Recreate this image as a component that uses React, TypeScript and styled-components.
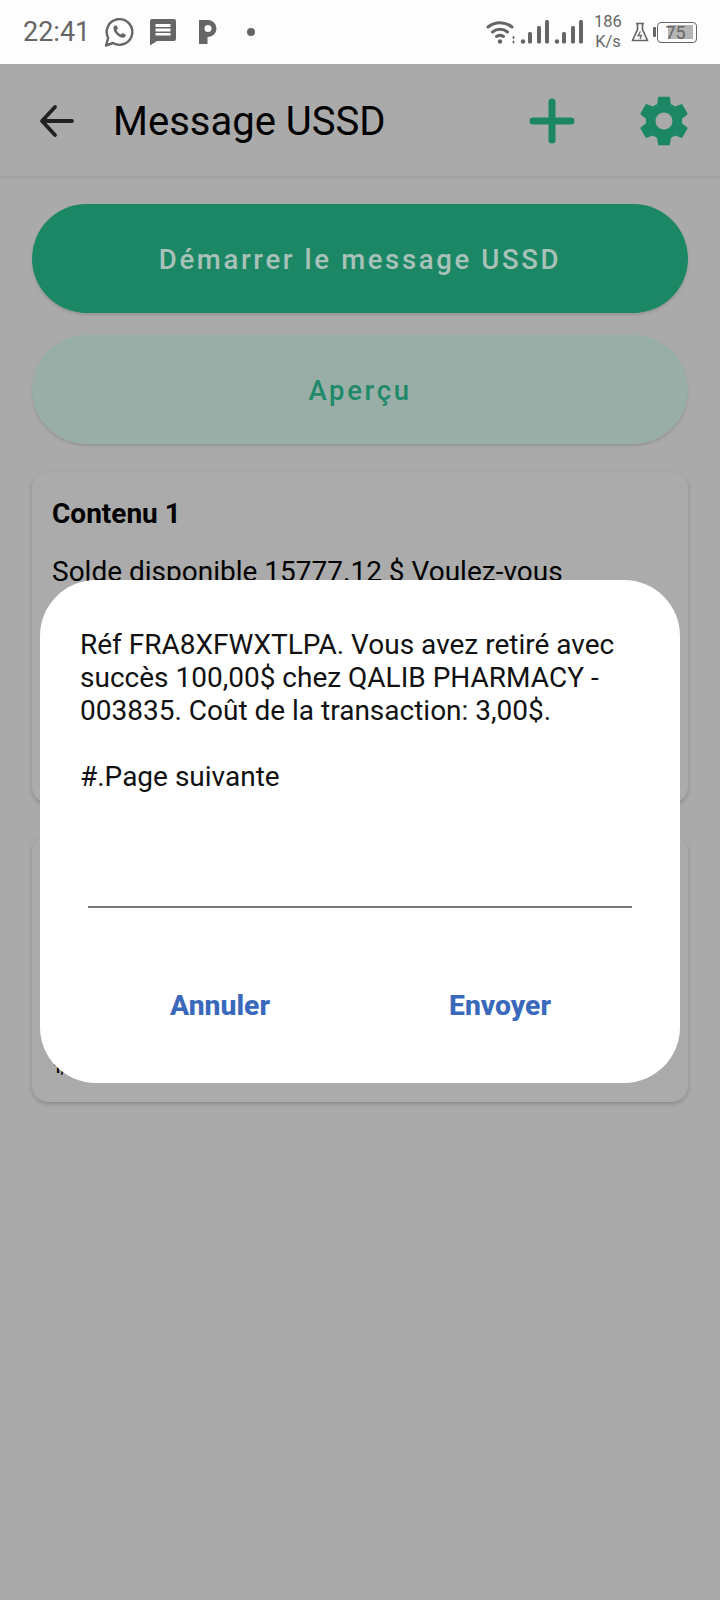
import styled, { createGlobalStyle } from 'styled-components'

const GlobalStyle = createGlobalStyle`
  html, body {
    margin: 0;
    padding: 0;
    background: #aaaaaa;
  }
  * {
    box-sizing: border-box;
  }
`

const Page = styled.div`
  width: 720px;
  height: 1600px;
  position: relative;
  overflow: hidden;
  background: #aaaaaa;
  font-family: Roboto, "Liberation Sans", sans-serif;
  color: #000;
`

const StatusBar = styled.div`
  height: 64px;
  background: #fdfdfd;
  display: flex;
  align-items: center;
  padding: 0 23px;
  color: #666;
`

const StatusLeft = styled.div`
  display: flex;
  align-items: center;
  flex: 1;
`

const Clock = styled.div`
  font-size: 27px;
  margin-right: 14px;
`

const StatusIcon = styled.svg<{ $gap?: number }>`
  display: block;
  flex: none;
  margin-left: ${(p) => p.$gap ?? 0}px;
`

const NetSpeed = styled.div`
  font-size: 16.5px;
  line-height: 20px;
  text-align: center;
  width: 30px;
  margin-left: 3px;
`

const Battery = styled.div`
  width: 40px;
  height: 21px;
  border: 1.5px solid #666;
  border-radius: 4px;
  position: relative;
  display: flex;
  align-items: center;
  justify-content: center;
  font-size: 18px;
  color: #666;
  margin-left: 8px;
  padding-right: 3px;
  background: linear-gradient(#b4b4b4, #b4b4b4) 9.5px center / 25px 14px no-repeat;
  &::before {
    content: '';
    position: absolute;
    left: -5.5px;
    top: 4px;
    width: 3px;
    height: 10px;
    background: #666;
    border-radius: 1px;
  }
`

const AppBar = styled.div`
  height: 115px;
  display: flex;
  align-items: center;
  padding: 2px 27px 0 38px;
  border-bottom: 3px solid #a3a3a3;
`

const Title = styled.div`
  font-size: 40px;
  line-height: 48px;
  margin-left: 39px;
  padding-top: 2px;
  flex: 1;
`

const AppBarActions = styled.div`
  display: flex;
  align-items: center;
  gap: 60px;
`

const Content = styled.div`
  padding: 25px 32px 0;
  display: flex;
  flex-direction: column;
`

const PillButton = styled.div<{ $variant: 'main' | 'soft' }>`
  height: 109px;
  border-radius: 55px;
  display: flex;
  align-items: center;
  justify-content: center;
  padding-top: 2px;
  font-size: 27.5px;
  font-weight: 500;
  letter-spacing: 2.65px;
  margin-bottom: ${(p) => (p.$variant === 'main' ? '22px' : '28px')};
  background: ${(p) => (p.$variant === 'main' ? '#1c8765' : '#9aaea8')};
  color: ${(p) => (p.$variant === 'main' ? '#a9c2b9' : '#1f8a69')};
  box-shadow: 0 2px 3px rgba(0, 0, 0, 0.12);
`

const Card = styled.div<{ $height: number }>`
  height: ${(p) => p.$height}px;
  border-radius: 16px;
  background: #ababab;
  box-shadow: 0 2px 4px rgba(0, 0, 0, 0.2);
  padding: 27px 20px 26px;
  margin-bottom: 33px;
  display: flex;
  flex-direction: column;
`

const CardTitle = styled.div`
  font-size: 28px;
  font-weight: 700;
  line-height: 30px;
  margin-bottom: 26px;
`

const CardText = styled.div`
  font-size: 28px;
  line-height: 33px;
`

const CardFragment = styled.div`
  margin-top: auto;
  font-size: 13px;
  font-weight: 800;
  line-height: 13px;
  padding-left: 2px;
  margin-bottom: 1px;
`

const Modal = styled.div`
  position: absolute;
  left: 40px;
  top: 580px;
  width: 640px;
  height: 503px;
  background: #fff;
  border-radius: 56px;
  padding: 48px 40px 0;
`

const ModalText = styled.div`
  font-size: 28px;
  line-height: 33px;
  height: 219px;
  white-space: pre-line;
  color: #111;
`

const InputLine = styled.div`
  height: 2px;
  background: #777;
  margin: 59px 8px 0;
  width: 544px;
`

const ModalActions = styled.div`
  display: flex;
  margin-top: 81px;
  margin-left: -40px;
  width: 640px;
`

const ModalAction = styled.div<{ $width: number }>`
  width: ${(p) => p.$width}px;
  text-align: center;
  font-size: 28.3px;
  font-weight: 800;
  line-height: 33px;
  color: #3a69bb;
`

const signalBars = (x: number) => (
  <g>
    <circle cx={x} cy="22.5" r="2.2" />
    <rect x={x + 5} y="13" width="4" height="11.500" rx="1.5" />
    <rect x={x + 14} y="7" width="4" height="17.500" rx="1.5" />
    <rect x={x + 22} y="1" width="4" height="23.500" rx="1.5" />
  </g>
)

export default function App() {
  return (
    <>
      <GlobalStyle />
      <Page>
        <StatusBar>
          <StatusLeft>
            <Clock>22:41</Clock>
            <StatusIcon width="30" height="30" viewBox="0 0 30 30" fill="none">
              <path d="M2 28.500l2.200-7.500a12.800 12.800 0 1 1 4.800 5z" stroke="#666" strokeWidth="2.400" strokeLinejoin="round" />
              <path d="M11 8.500c-2 1-2 4 0 7s6 6 9 5c1.500-.5 2-2 1.500-3l-3-1.500-1.500 1.500c-2-.5-4-3-4.500-4.500l1.500-1.500-1.300-3z" fill="#666" />
            </StatusIcon>
            <StatusIcon $gap={15} width="28" height="28" viewBox="0 0 28 28" fill="#666">
              <path d="M3 1h22a2 2 0 0 1 2 2v18a2 2 0 0 1-2 2H8l-7 4.500V3a2 2 0 0 1 2-2z" />
              <path d="M6.500 6h15v3h-15zM6.500 10.500h15v3h-15zM6.500 15h15v2.500h-15z" fill="#fdfdfd" />
            </StatusIcon>
            <StatusIcon $gap={21} width="22" height="26" viewBox="0 0 22 26" fill="#666">
              <path fillRule="evenodd" d="M1 1H10a8.500 8.500 0 0 1 0 17H9.500V25H1zM10 6a3.500 3.500 0 1 0 0 7 3.500 3.500 0 0 0 0-7z" />
            </StatusIcon>
            <StatusIcon $gap={27} width="8" height="8" viewBox="0 0 8 8" fill="#666">
              <circle cx="4" cy="4" r="4" />
            </StatusIcon>
          </StatusLeft>
          <StatusIcon width="34" height="26" viewBox="0 0 34 26" fill="none" stroke="#666" strokeWidth="3" strokeLinecap="round">
            <path d="M3 8a19 19 0 0 1 24 0M7.500 13a12 12 0 0 1 15 0M11.500 17.500a6.500 6.500 0 0 1 7 0" />
            <circle cx="15" cy="22.500" r="2.200" fill="#666" stroke="none" />
            <path d="M28.500 18v1M28.500 22.500v1" strokeWidth="1.800" />
          </StatusIcon>
          <StatusIcon width="71" height="26" viewBox="0 0 71 26" fill="#666">
            {signalBars(4)}
            {signalBars(38)}
          </StatusIcon>
          <NetSpeed>
            186
            <br />
            K/s
          </NetSpeed>
          <StatusIcon $gap={8} width="18" height="20" viewBox="0 0 18 20" fill="none" stroke="#666" strokeWidth="1.700">
            <path d="M5 1.500h8M6.500 1.500v6L1.500 18.500h15L11.500 7.500v-6" strokeLinejoin="round" />
            <path d="M9.500 9.500l-2.500 4h3.500l-1.500 3.500" strokeWidth="1.300" />
          </StatusIcon>
          <Battery>75</Battery>
        </StatusBar>

        <AppBar>
          <svg width="36" height="36" viewBox="0 0 36 36" fill="none" stroke="#222" strokeWidth="3.800" strokeLinecap="round" strokeLinejoin="round">
            <path d="M34 18H5M17 4L4 18l13 14" />
          </svg>
          <Title>Message USSD</Title>
          <AppBarActions>
            <svg width="46" height="46" viewBox="0 0 46 46" fill="none" stroke="#1c8765" strokeWidth="7" strokeLinecap="round">
              <path d="M23 4v38M4 23h38" />
            </svg>
            <svg width="58" height="58" viewBox="0 0 24 24" fill="#1c8765">
              <path d="M19.430 12.980c.04-.32.07-.64.07-.98s-.03-.66-.07-.98l2.110-1.650c.19-.15.24-.42.12-.64l-2-3.460c-.12-.22-.39-.3-.61-.22l-2.490 1c-.52-.4-1.080-.73-1.690-.98l-.38-2.650C14.460 2.180 14.250 2 14 2h-4c-.25 0-.46.18-.49.42l-.38 2.650c-.61.25-1.170.59-1.690.98l-2.490-1c-.23-.09-.49 0-.61.22l-2 3.460c-.13.22-.07.49.12.64l2.110 1.650c-.04.32-.07.65-.07.98s.03.66.07.98l-2.110 1.650c-.19.15-.24.42-.12.64l2 3.460c.12.22.39.3.61.22l2.490-1c.52.4 1.080.73 1.690.98l.38 2.650c.03.24.24.42.49.42h4c.25 0 .46-.18.49-.42l.38-2.650c.61-.25 1.170-.59 1.690-.98l2.490 1c.23.09.49 0 .61-.22l2-3.460c.12-.22.07-.49-.12-.64l-2.110-1.650zM12 15.500c-1.930 0-3.500-1.570-3.500-3.500s1.570-3.500 3.500-3.500 3.500 1.570 3.500 3.500-1.570 3.500-3.500 3.500z" />
            </svg>
          </AppBarActions>
        </AppBar>

        <Content>
          <PillButton $variant="main">Démarrer le message USSD</PillButton>
          <PillButton $variant="soft">Aperçu</PillButton>
          <Card $height={331}>
            <CardTitle>Contenu 1</CardTitle>
            <CardText>Solde disponible 15777.12 $ Voulez-vous</CardText>
          </Card>
          <Card $height={266}>
            <CardFragment>T,</CardFragment>
          </Card>
        </Content>

        <Modal>
          <ModalText>{'Réf FRA8XFWXTLPA. Vous avez retiré avec\nsuccès 100,00$ chez QALIB PHARMACY -\n003835. Coût de la transaction: 3,00$.\n\n#.Page suivante'}</ModalText>
          <InputLine />
          <ModalActions>
            <ModalAction $width={360}>Annuler</ModalAction>
            <ModalAction $width={200}>Envoyer</ModalAction>
          </ModalActions>
        </Modal>
      </Page>
    </>
  )
}
